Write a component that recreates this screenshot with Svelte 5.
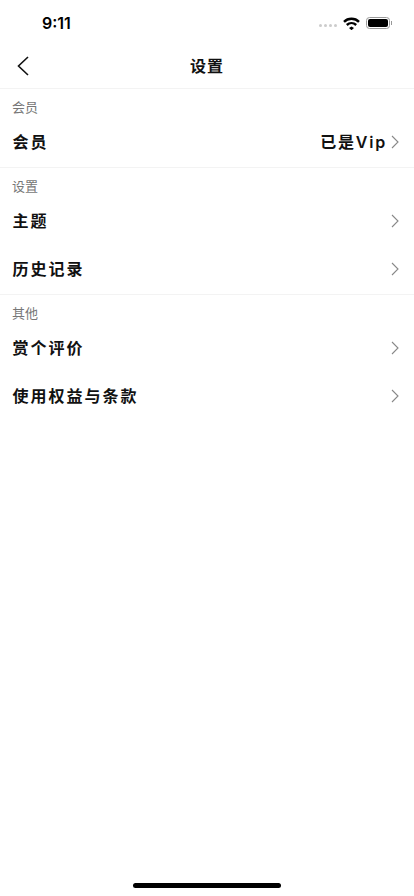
<script>
  const sections = [
    { title: '会员', rows: [{ label: '会员', value: '已是Vip' }] },
    { title: '设置', rows: [{ label: '主题' }, { label: '历史记录' }] },
    { title: '其他', rows: [{ label: '赏个评价' }, { label: '使用权益与条款' }] }
  ];
</script>

<div class="page">
  <div class="status">
    <span class="time">9:11</span>
    <div class="indicators">
      <span class="dots"><i></i><i></i><i></i><i></i></span>
      <svg class="wifi" width="17" height="13" viewBox="0 0 17 13" aria-hidden="true">
        <path d="M8.500 9.500 11 11 8.500 13.200 6 11Z" fill="#000"/>
        <path d="M1 4.800C5 .7 12 .7 16 4.800" fill="none" stroke="#000" stroke-width="2.400"/>
        <path d="M3.800 8C6.500 5.500 10.500 5.500 13.200 8" fill="none" stroke="#000" stroke-width="2.400"/>
      </svg>
      <span class="battery"><b></b></span><span class="nub"></span>
    </div>
  </div>

  <header class="nav">
    <svg class="back" width="12" height="20" viewBox="0 0 12 20" aria-hidden="true">
      <path d="M11 1 1.500 10 11 19" fill="none" stroke="#111" stroke-width="1.600"/>
    </svg>
    <h1>设置</h1>
  </header>

  {#each sections as s, i}
    <section class:ruled={i < sections.length - 1}>
      <div class="title">{s.title}</div>
      {#each s.rows as r}
        <div class="row">
          <span class="label">{r.label}</span>
          {#if r.value}<span class="value">{r.value}</span>{/if}
          <svg class="chev" width="8" height="14" viewBox="0 0 8 14" aria-hidden="true">
            <path d="M1 1 7 7 1 13" fill="none" stroke="#888" stroke-width="1.100"/>
          </svg>
        </div>
      {/each}
    </section>
  {/each}

  <div class="spacer"></div>
  <div class="home"></div>
</div>

<style>
  :global(body) {
    margin: 0;
    background: #fff;
  }
  .page {
    height: 896px;
    display: flex;
    flex-direction: column;
    background: #fff;
    color: #111;
    font-family: "Liberation Sans", "Noto Sans CJK SC", sans-serif;
    overflow: hidden;
  }
  .status {
    height: 44px;
    padding: 2px 22px 0 42px;
    display: flex;
    align-items: center;
    justify-content: space-between;
    box-sizing: border-box;
  }
  .time {
    font-family: Inter, "Liberation Sans", sans-serif;
    font-size: 16px;
    font-weight: 600;
    color: #000;
  }
  .indicators {
    display: flex;
    align-items: center;
  }
  .dots {
    display: flex;
    gap: 1.500px;
    margin-right: 6px;
    margin-top: 5px;
  }
  .dots i {
    width: 3.500px;
    height: 3.500px;
    border-radius: 50%;
    background: #ccc;
  }
  .wifi {
    margin-right: 6px;
  }
  .battery {
    width: 24px;
    height: 12px;
    box-sizing: border-box;
    border: 1px solid #999;
    border-radius: 3.500px;
    padding: 1px;
    display: flex;
  }
  .battery b {
    flex: 1;
    background: #000;
    border-radius: 2px;
  }
  .nub {
    width: 1px;
    height: 4px;
    margin-left: 1px;
    background: #999;
  }
  .nav {
    height: 44px;
    display: flex;
    align-items: center;
    justify-content: center;
    position: relative;
    border-bottom: 1px solid #f3f3f3;
  }
  .back {
    position: absolute;
    left: 17px;
    top: 12px;
  }
  h1 {
    margin: 0 0 2px;
    font-size: 16px;
    font-weight: 700;
    letter-spacing: 1px;
  }
  section.ruled {
    padding-bottom: 2px;
    border-bottom: 1px solid #f3f3f3;
  }
  .title {
    height: 28px;
    padding: 10px 0 0 12px;
    box-sizing: border-box;
    font-size: 13px;
    line-height: 18px;
    color: #777;
  }
  .row {
    height: 48px;
    display: flex;
    align-items: center;
    padding: 0 15px 0 12.500px;
    font-size: 16px;
    font-weight: 700;
    letter-spacing: 2px;
  }
  .label {
    flex: 1;
  }
  .value {
    margin-right: 4px;
    font-family: Inter, "Noto Sans CJK SC", sans-serif;
    font-weight: 600;
    letter-spacing: 1.800px;
  }
  .chev {
    margin-top: 2px;
  }
  .spacer {
    flex: 1;
  }
  .home {
    width: 148px;
    height: 5px;
    margin: 0 auto 8px;
    border-radius: 3px;
    background: #000;
  }
</style>
